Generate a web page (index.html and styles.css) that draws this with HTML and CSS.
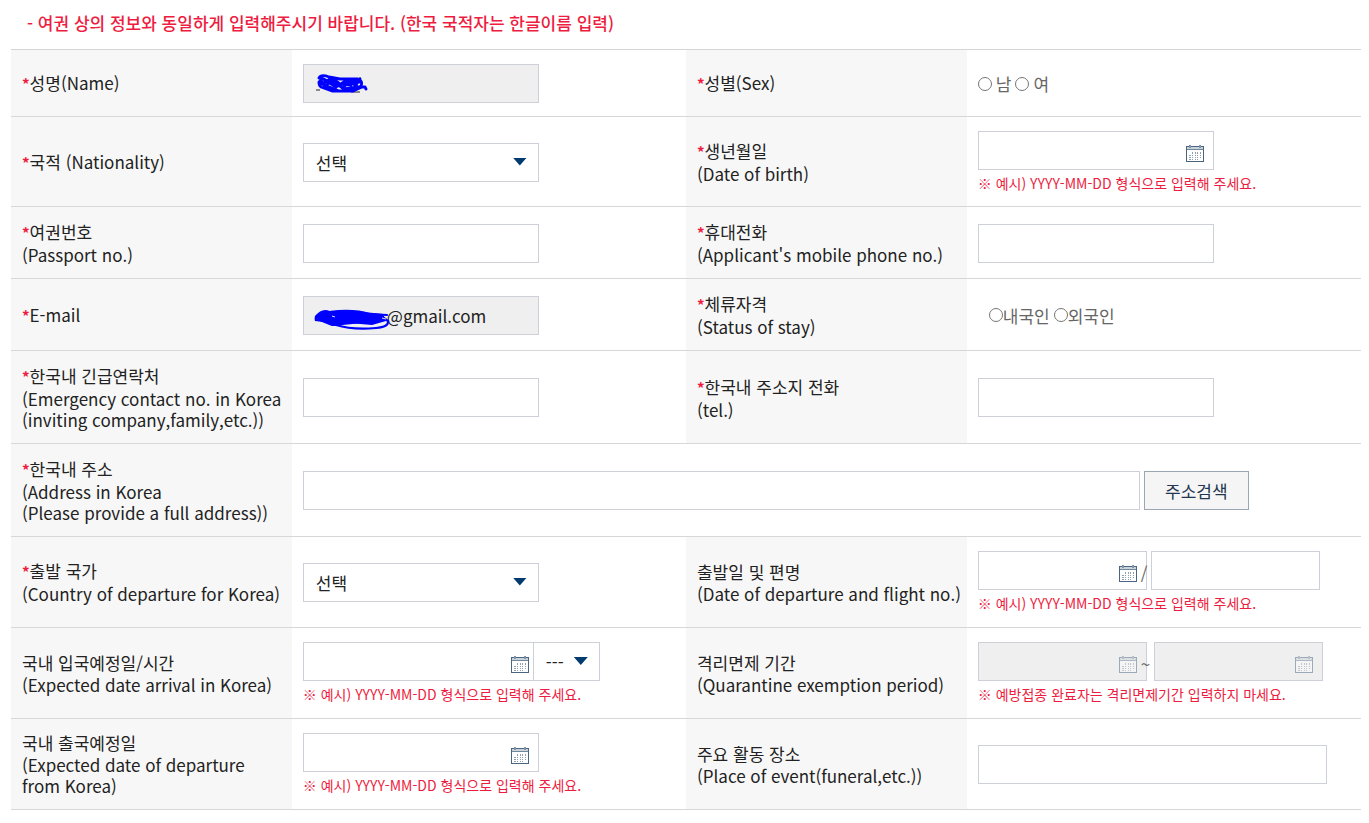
FILE: index.html
```html
<!DOCTYPE html>
<html lang="ko">
<head>
<meta charset="utf-8">
<meta name="viewport" content="width=device-width, initial-scale=1">
<title>신청인 정보</title>
<link rel="stylesheet" href="styles.css">
</head>
<body>
<svg class="sprite" aria-hidden="true">
  <symbol id="calendar" viewBox="0 0 18 17">
    <path d="M0 1h18v16H0z" fill="#fff" fill-opacity=".6"/>
    <path d="M1 2h16v2H1z" fill="#c9d3dc"/>
    <path d="M1 4h16v1H1z" fill="#73879b"/>
    <path d="M0 1h18v16H0zM1 2v14h16V2z" fill="#4b6580" fill-rule="evenodd"/>
    <path d="M3 0h2v3H3zM13 0h2v3h-2z" fill="#8395a8"/>
    <path d="M6 7h1v2H6zM9 7h1v2H9zM11 7h1v2h-1zM14 7h1v2h-1zM3 10h2v1H3zM6 10h1v1H6zM9 10h1v1H9zM11 10h1v1h-1zM14 10h1v1h-1zM3 12h2v1H3zM6 12h1v1H6zM9 12h1v1H9zM11 12h1v1h-1zM14 12h1v1h-1zM3 14h2v1H3zM6 14h1v1H6zM9 14h1v1H9zM11 14h1v1h-1z" fill="#8fa0b0"/>
  </symbol>
</svg>
<form class="application">
  <p class="notice">- 여권 상의 정보와 동일하게 입력해주시기 바랍니다. (한국 국적자는 한글이름 입력)</p>
  <table class="fields">
    <colgroup><col class="col-label"><col class="col-value"><col class="col-label"><col class="col-value"></colgroup>
    <tbody>
      <tr>
        <th scope="row"><label for="name"><span class="ko"><b class="req">*</b>성명(Name)</span></label></th>
        <td>
          <div class="masked">
            <input class="control" id="name" type="text" readonly>
            <svg class="scribble scribble-name" viewBox="0 0 52 22" aria-hidden="true">
              <path d="M0 17h4M35 19h9M44 4v2" stroke="#223" fill="none"/>
              <path d="M3 5Q5 1 13 4L24 6H42Q47 8 45 13L36 18H16L5 14Q0 9 7 6L20 14 31 7 42 14 28 16 14 6 6 11 23 18 37 18 46 14 49 14 50 16M4 4L15 10 35 12M9 14Q18 2 25 13M28 14Q34 5 40 11M3 9L16 17M44 6L38 15M6 9L12 14M30 9L44 9" fill="none" stroke="#00f" stroke-width="2.8" stroke-linecap="round" stroke-linejoin="round"/>
            </svg>
          </div>
        </td>
        <th scope="row"><span class="ko"><b class="req">*</b>성별(Sex)</span></th>
        <td>
          <div class="choices">
            <input class="radio" type="radio" name="sex" id="male"><label for="male">남</label>
            <input class="radio" type="radio" name="sex" id="female"><label for="female">여</label>
          </div>
        </td>
      </tr>
      <tr>
        <th scope="row"><label for="nationality"><span class="ko"><b class="req">*</b>국적 (Nationality)</span></label></th>
        <td><div class="select"><select class="control" id="nationality"><option>선택</option></select></div></td>
        <th scope="row"><label for="birth"><span class="ko"><b class="req">*</b>생년월일</span>(Date of birth)</label></th>
        <td>
          <div class="date"><input class="control" id="birth" type="text"><button class="pick" type="button" aria-label="날짜 선택"><svg><use href="#calendar"/></svg></button></div>
          <p class="hint">※ 예시) YYYY-MM-DD 형식으로 입력해 주세요.</p>
        </td>
      </tr>
      <tr>
        <th scope="row"><label for="passport"><span class="ko"><b class="req">*</b>여권번호</span>(Passport no.)</label></th>
        <td><input class="control" id="passport" type="text"></td>
        <th scope="row"><label for="mobile"><span class="ko"><b class="req">*</b>휴대전화</span>(Applicant's mobile phone no.)</label></th>
        <td><input class="control" id="mobile" type="text"></td>
      </tr>
      <tr>
        <th scope="row"><label for="email"><span class="ko"><b class="req">*</b>E-mail</span></label></th>
        <td>
          <div class="masked">
            <input class="control email" id="email" type="text" value="@gmail.com" readonly>
            <svg class="scribble scribble-email" viewBox="0 0 76 22" aria-hidden="true">
              <path d="M7 4Q14 0 17 3H50L69 5 72 12 58 16 35 14 20 17 9 13 1 12Q-1 5 7 4z" fill="#00f"/>
              <path d="M2 8Q8 0 15 3Q40 0 55 5L73 6M6 11L18 16 70 11M22 16Q38 21 62 19Q75 18 74 12L70 9" fill="none" stroke="#00f" stroke-width="2.2" stroke-linecap="round"/>
              <path d="M68 9l4 1M18 7l3 1" stroke="#dde" fill="none"/>
            </svg>
          </div>
        </td>
        <th scope="row"><span class="ko"><b class="req">*</b>체류자격</span>(Status of stay)</th>
        <td>
          <div class="choices choices-tight">
            <span class="choice"><input class="radio" type="radio" name="stay" id="korean"><label for="korean">내국인</label></span>
            <span class="choice"><input class="radio" type="radio" name="stay" id="foreign"><label for="foreign">외국인</label></span>
          </div>
        </td>
      </tr>
      <tr>
        <th scope="row"><label for="emergency"><span class="ko"><b class="req">*</b>한국내 긴급연락처</span>(Emergency contact no. in Korea<br>(inviting company,family,etc.))</label></th>
        <td><input class="control" id="emergency" type="text"></td>
        <th scope="row"><label for="tel"><span class="ko"><b class="req">*</b>한국내 주소지 전화</span>(tel.)</label></th>
        <td><input class="control" id="tel" type="text"></td>
      </tr>
      <tr>
        <th scope="row"><label for="address"><span class="ko"><b class="req">*</b>한국내 주소</span>(Address in Korea<br>(Please provide a full address))</label></th>
        <td colspan="3">
          <div class="line line-gap"><input class="control address" id="address" type="text"><button class="search" type="button">주소검색</button></div>
        </td>
      </tr>
    </tbody>
    <tbody class="travel">
      <tr>
        <th scope="row"><label for="country"><span class="ko"><b class="req">*</b>출발 국가</span>(Country of departure for Korea)</label></th>
        <td><div class="select"><select class="control" id="country"><option>선택</option></select></div></td>
        <th scope="row"><label for="departure"><span class="ko">출발일 및 편명</span>(Date of departure and flight no.)</label></th>
        <td>
          <div class="line line-gap">
            <div class="date date-short"><input class="control" id="departure" type="text"><button class="pick" type="button" aria-label="날짜 선택"><svg><use href="#calendar"/></svg></button><span class="mark">/</span></div>
            <input class="control short" type="text" aria-label="편명">
          </div>
          <p class="hint">※ 예시) YYYY-MM-DD 형식으로 입력해 주세요.</p>
        </td>
      </tr>
      <tr>
        <th scope="row"><label for="arrival"><span class="ko">국내 입국예정일/시간</span>(Expected date arrival in Korea)</label></th>
        <td>
          <div class="line">
            <div class="date"><input class="control" id="arrival" type="text"><button class="pick" type="button" aria-label="날짜 선택"><svg><use href="#calendar"/></svg></button></div>
            <div class="select select-hour"><select class="control" aria-label="시간"><option>---</option></select></div>
          </div>
          <p class="hint">※ 예시) YYYY-MM-DD 형식으로 입력해 주세요.</p>
        </td>
        <th scope="row"><label for="exempt-from"><span class="ko">격리면제 기간</span>(Quarantine exemption period)</label></th>
        <td>
          <div class="line line-range">
            <div class="date date-short"><input class="control" id="exempt-from" type="text" disabled><button class="pick" type="button" aria-label="날짜 선택" disabled><svg><use href="#calendar"/></svg></button><span class="mark">~</span></div>
            <div class="date date-short"><input class="control" type="text" aria-label="종료일" disabled><button class="pick" type="button" aria-label="날짜 선택" disabled><svg><use href="#calendar"/></svg></button></div>
          </div>
          <p class="hint">※ 예방접종 완료자는 격리면제기간 입력하지 마세요.</p>
        </td>
      </tr>
      <tr>
        <th scope="row"><label for="leave"><span class="ko">국내 출국예정일</span>(Expected date of departure<br>from Korea)</label></th>
        <td>
          <div class="date"><input class="control" id="leave" type="text"><button class="pick" type="button" aria-label="날짜 선택"><svg><use href="#calendar"/></svg></button></div>
          <p class="hint">※ 예시) YYYY-MM-DD 형식으로 입력해 주세요.</p>
        </td>
        <th scope="row"><label for="place"><span class="ko">주요 활동 장소</span>(Place of event(funeral,etc.))</label></th>
        <td><input class="control place" id="place" type="text"></td>
      </tr>
    </tbody>
  </table>
</form>
</body>
</html>
```

FILE: styles.css
```css
* { box-sizing: border-box; }

body,
button,
input,
select {
  font-family: "Noto Sans CJK KR", sans-serif;
  font-size: 17px;
}

body {
  margin: 0;
  background: #fff;
  color: #666;
  line-height: 21px;
}

.sprite {
  position: absolute;
  width: 0;
  height: 0;
}

.application { padding: 10px 8px 12px 11px; }

.notice {
  margin: 0 0 14px;
  padding-left: 16px;
  color: #ed1c40;
  font-size: 17px;
  font-weight: 500;
  line-height: 25px;
}

.fields {
  width: 100%;
  border-collapse: collapse;
  table-layout: fixed;
  border-top: 1px solid #d3d5d8;
  border-bottom: 1px solid #c6c8ca;
}

.col-label { width: 20.8%; }
.col-value { width: 29.2%; }

.fields tr { border-bottom: 1px solid #d6d7d9; }

.fields th,
.fields td {
  padding: 14px 11px 13px;
  text-align: left;
  vertical-align: middle;
}

.fields th {
  background: #f7f7f7;
  color: #222;
  font-weight: 400;
  white-space: nowrap;
}

.fields .travel td { padding-bottom: 14px; }

.fields .travel th {
  padding-top: 13px;
  padding-bottom: 13px;
}

.ko {
  display: block;
  line-height: 22px;
}

.req {
  color: #ed1c40;
  font-size: 15px;
  font-weight: 700;
}

.control {
  display: block;
  width: 236px;
  max-width: 100%;
  height: 39px;
  margin: 0;
  padding: 0 12px;
  border: 1px solid #cdd0d8;
  border-radius: 0;
  background: #fff;
  color: #222;
}

.control:read-only:not(select),
.control:disabled { background: #efefef; }

.masked,
.select,
.date {
  position: relative;
  width: 236px;
}

.email { padding-left: 83px; }

.scribble { position: absolute; }

.scribble-name {
  left: 13px;
  top: 9px;
  width: 52px;
  height: 22px;
}

.scribble-email {
  left: 11px;
  top: 13px;
  width: 76px;
  height: 22px;
}

.select .control {
  appearance: none;
}

.select::after {
  content: "";
  position: absolute;
  right: 12px;
  top: 15px;
  width: 14px;
  height: 8px;
  background: #003a6e;
  clip-path: polygon(0 0, 100% 0, 50% 100%);
  pointer-events: none;
}

.select-hour {
  width: 67px;
  margin-left: -6px;
}

.date-short,
.short { width: 169px; }

.pick {
  position: absolute;
  right: 10px;
  top: 14px;
  width: 18px;
  height: 17px;
  padding: 0;
  border: 0;
  background: none;
}

.pick svg {
  display: block;
  width: 18px;
  height: 17px;
}

.pick:disabled { opacity: 0.5; }

.mark {
  position: absolute;
  left: 163px;
  top: 11px;
}

.line {
  display: flex;
}

.line-gap { gap: 4px; }
.line-range { gap: 7px; }

.address {
  flex: 1;
  max-width: 837px;
}

.place { width: 349px; }

.search {
  width: 105px;
  height: 39px;
  padding: 0;
  border: 1px solid #9aa6b2;
  background: #f5f5f5;
  color: #24364f;
}

.hint {
  margin: 3px 0 0;
  color: #ed1c40;
  font-size: 14px;
  line-height: 20px;
  white-space: nowrap;
}

.choices {
  display: flex;
  align-items: center;
  gap: 4px;
}

.choices-tight { padding-left: 11px; }

.choice {
  display: flex;
  align-items: center;
}

.radio {
  width: 14px;
  height: 14px;
  margin: 0;
}
```
